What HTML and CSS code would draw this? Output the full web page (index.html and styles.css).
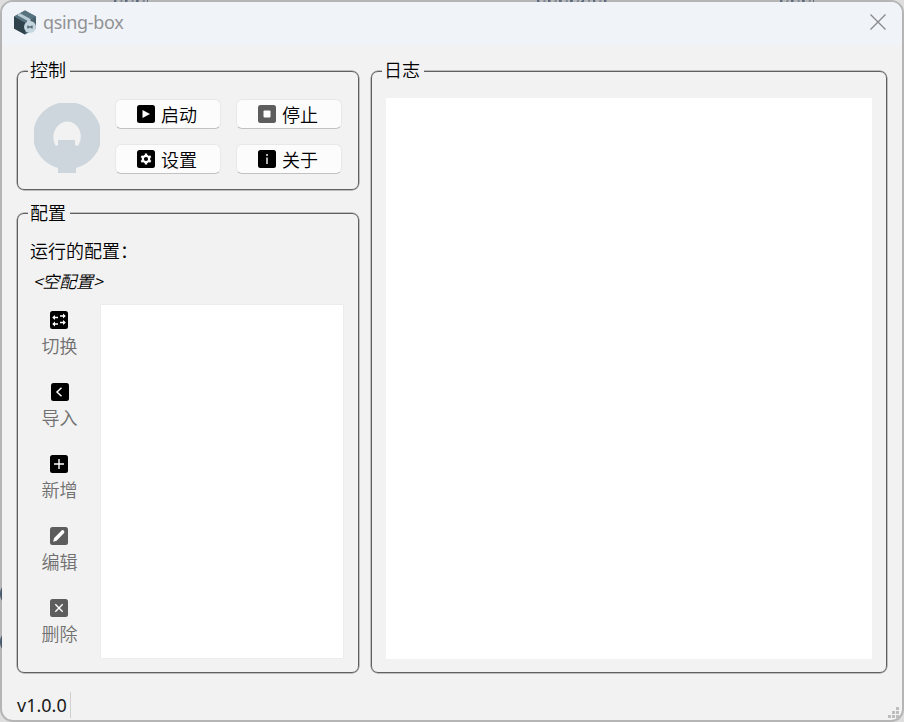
FILE: index.html
```html
<!DOCTYPE html>
<html lang="zh-CN">
<head>
<meta charset="utf-8">
<title>qsing-box</title>
<link rel="stylesheet" href="styles.css">
</head>
<body>
<main class="window">
  <header class="titlebar">
    <svg class="logo" viewBox="0 0 24 24">
      <path d="M1 6 12 0 23 6V18L12 24 1 18Z" fill="#49616c"/>
      <path d="M1 6 12 12V24L1 18Z" fill="#30434d"/>
      <path d="M1 6 12 0 23 6 12 12Z" fill="#587380"/>
      <path d="M4 4.400 7 2.700 17.500 8.500V12L14 13V10Z" fill="#b9cbd4"/>
      <circle cx="17" cy="16.500" r="6" fill="#c6d6df"/>
      <path d="M15 15v3M15 16.500h4M19 15v3" stroke="#506773" stroke-width="1.400" fill="none"/>
    </svg>
    <h1>qsing-box</h1>
    <svg class="close" viewBox="0 0 16 16"><path d="M.5.5 15.500 15.500M15.500.5.5 15.500" stroke="#85878a" stroke-width="1.300"/></svg>
  </header>
  <div class="content">
    <div class="side">
      <section class="group control">
        <h2>控制</h2>
        <svg class="ring" viewBox="0 0 66 72"><path fill="#ccd6dc" fill-rule="evenodd" d="M25 1h17A33.500 33.500 0 0 1 42 66V71H24V66A33.500 33.500 0 0 1 25 1ZM24 38h17v5l3 1C51 33 44 19.500 33.500 19.500S15 33 22 44l2-1Z"/></svg>
        <div class="buttons">
          <button><svg viewBox="0 0 18 18"><rect width="18" height="18" rx="2.500"/><path d="M5.500 5 13 9 5.500 13Z" fill="#fff"/></svg>启动</button>
          <button><svg viewBox="0 0 18 18"><rect width="18" height="18" rx="2.500" fill="#5d5d5d"/><rect x="5.500" y="5.500" width="7" height="7" rx="1" fill="#fff"/></svg>停止</button>
          <button><svg viewBox="0 0 18 18"><rect width="18" height="18" rx="2.500"/><circle cx="9" cy="9" r="3.200" fill="none" stroke="#fff" stroke-width="2.200"/><path d="M9 3.500v2M9 12.500v2M4.240 6.250l1.700 1M12.060 10.750l1.700 1M4.240 11.750l1.700-1M12.060 7.250l1.700-1" stroke="#fff" stroke-width="2.400"/></svg>设置</button>
          <button><svg viewBox="0 0 18 18"><rect width="18" height="18" rx="2.500"/><path d="M9 4v2M9 7.500V14" stroke="#ddd" stroke-width="1.600"/></svg>关于</button>
        </div>
      </section>
      <section class="group config">
        <h2>配置</h2>
        <p class="label">运行的配置：</p>
        <p class="current">&lt;空配置&gt;</p>
        <div class="profiles">
          <nav>
            <a><svg viewBox="0 0 18 18"><rect width="18" height="18" rx="2.500"/><path d="M3 6.500h5M3 13h5M10 5h5M10 11.500h5" stroke="#fff" stroke-width="1.300"/><path d="M2.200 6.500 5 4v5ZM2.200 13 5 10.500v5ZM15.800 5 13 2.500v5ZM15.800 11.500 13 9v5Z" fill="#fff"/></svg><span>切换</span></a>
            <a><svg class="import" viewBox="0 0 18 18"><rect width="18" height="18" rx="2.500"/><path d="M10.500 4.800 6 9l4.500 4.200" fill="none" stroke="#fff" stroke-width="1.500"/></svg><span>导入</span></a>
            <a><svg viewBox="0 0 18 18"><rect width="18" height="18" rx="2.500"/><path d="M4 9h10M9 4v10" stroke="#fff" stroke-width="1.400"/></svg><span>新增</span></a>
            <a><svg viewBox="0 0 18 18"><rect width="18" height="18" rx="2.500" fill="#5d5d5d"/><path d="m3.200 14.800.9-3.800 7.500-7.500q1.200-.9 2.300.2 1 1.200.2 2.300L6.600 13.700Z" fill="#fff"/></svg><span>编辑</span></a>
            <a><svg viewBox="0 0 18 18"><rect width="18" height="18" rx="2.500" fill="#5d5d5d"/><path d="m5.300 5.300 7.400 7.400M12.700 5.300l-7.400 7.400" stroke="#fff" stroke-width="1.400"/></svg><span>删除</span></a>
          </nav>
          <div class="list"></div>
        </div>
      </section>
    </div>
    <section class="group log">
      <h2>日志</h2>
      <div class="output"></div>
    </section>
  </div>
  <footer>
    <span class="version">v1.0.0</span>
    <svg class="grip" viewBox="0 0 11 11"><path d="M8 0h3v3H8zM4 4h3v3H4zM8 4h3v3H8zM0 8h3v3H0zM4 8h3v3H4zM8 8h3v3H8z" fill="#bdbdbd"/></svg>
  </footer>
</main>
<div class="behind b1"></div><div class="behind b2"></div><div class="behind b3"></div>
<div class="arc a1"></div><div class="arc a2"></div>
</body>
</html>
```
FILE: styles.css
```css
* { box-sizing: border-box; margin: 0; }
body {
  width: 904px; height: 722px; padding: 0; overflow: hidden; position: relative;
  background: #dedede;
  font: 350 18px/26px "Noto Sans CJK SC", sans-serif; color: #000;
}
/* traces of the desktop showing through the window's edge */
.behind {
  position: absolute; top: 0; height: 2px;
  background: repeating-linear-gradient(100deg, #5d6b80 0 2px, #b5b5b5 3px 6px, #7f8896 7px 8px, #b5b5b5 9px 11px);
}
.b1 { left: 114px; width: 34px; }
.b2 { left: 537px; width: 71px; }
.b3 { left: 780px; width: 34px; }
.arc { position: absolute; left: 0; width: 5px; height: 16px; border-left: 2px solid #46586a; border-radius: 5px 0 0 5px / 8px 0 0 8px; clip-path: inset(0 3px 0 0); }
.a1 { top: 586px; }
.a2 { top: 634px; }
.window {
  position: relative; width: 904px; height: 722px;
  border: 2px solid #b5b5b5; border-radius: 13px;
  background: #f2f2f2; background-clip: padding-box;
  display: flex; flex-direction: column; overflow: hidden;
}
.titlebar {
  height: 43px; flex: none; background: #f0f3f8;
  display: flex; align-items: center; padding: 0 16px 3px 11px;
}
.logo { width: 24px; height: 25px; }
.titlebar h1 {
  font: 400 18px/24px "Noto Sans", sans-serif; color: #909295;
  margin-left: 6px; flex: 1; letter-spacing: -.35px;
}
.close { width: 16px; height: 16px; }
.content {
  height: 628px; flex: none; padding: 26px 15px 0;
  display: grid; grid-template-columns: 342px 516px; gap: 12px;
}
.side { display: flex; flex-direction: column; gap: 23px; }
.group { border: 1px solid #606060; border-radius: 7px; box-shadow: 0 0 0 .5px #8a8a8a; }
.group h2 {
  font-size: 18px; font-weight: 350; line-height: 26px; width: 42px; height: 26px;
  margin: -16px 0 0 10px; padding-left: 2px; background: #f2f2f2; white-space: nowrap;
}
.control { height: 119px; display: grid; grid-template-columns: 97px 227px; grid-template-rows: 10px 1fr; }
.control h2 { grid-column: 1 / 3; }
.ring { width: 66px; height: 72px; margin: 20px 0 0 16px; }
.buttons { display: grid; grid-template-columns: 106px 106px; grid-template-rows: 30px 30px; gap: 15px; padding-top: 17px; }
button {
  border: 1px solid #e8e8e8; border-bottom-color: #c2c2c2; border-radius: 6px;
  background: #fcfcfc; font: inherit; line-height: 24px; color: #000; padding: 0 2px 0 0;
  display: flex; align-items: center; justify-content: center; gap: 6px;
}
button svg { width: 18px; height: 18px; }
.config { height: 460px; }
.config h2 { margin-top: -15px; }
.label { margin: 12px 0 0 12px; }
.current { margin: 5px 0 0 15px; font-size: 17px; line-height: 26px; font-style: italic; }
.profiles { display: flex; margin-top: 11px; height: 353px; }
nav { width: 83px; display: flex; flex-direction: column; padding: 6px 2px 0 0; }
nav a { height: 72px; flex: none; display: flex; flex-direction: column; align-items: center; gap: 3px; color: #707070; }
nav span { padding-left: 2px; }
nav svg { width: 18px; height: 18px; flex: none; }
nav .import { margin-left: 3px; }
.list { width: 242px; background: #fff; box-shadow: 0 0 0 .6px #e8e8e8; }
.output { width: 486px; height: 561px; margin: 16px 0 0 14px; background: #fff; }
footer { flex: 1; display: flex; justify-content: space-between; align-items: flex-end; padding: 0 3px 2px 15px; }
.version {
  height: 26px; width: 54px; border-right: 1px solid #d0d0d0;
  font: 400 18px/26px "Noto Sans", sans-serif; color: #1a1a1a;
}
.grip { width: 11px; height: 11px; }
```
